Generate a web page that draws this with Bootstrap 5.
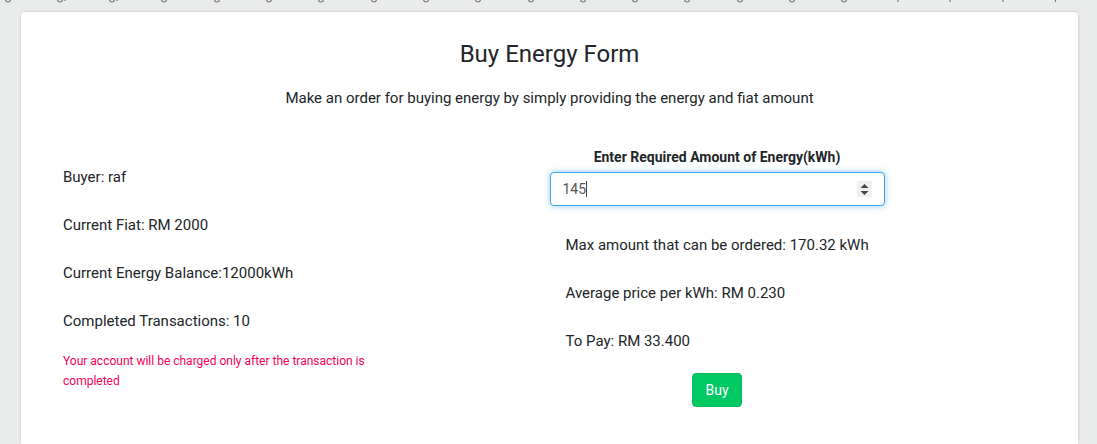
<!DOCTYPE html>
<html lang="en">
<head>
<meta charset="utf-8">
<meta name="viewport" content="width=device-width, initial-scale=1">
<title>Buy Energy Form</title>
<link href="https://cdn.jsdelivr.net/npm/bootstrap@5.3.0/dist/css/bootstrap.min.css" rel="stylesheet">
<style>
  body { background: #eaeceb; color: #212529; font-family: Roboto, sans-serif; font-size: 15px; line-height: 24px; }
  .axis-strip { height: 12px; }
  .order-card { min-height: calc(100vh - 12px); margin: 0 19px 0 21px; padding: 27px 26px 36px; border-radius: 4px 4px 0 0; box-shadow: 0 0 3px rgba(0, 0, 0, .18); }
  .order-card h1 { font-size: 24px; line-height: 30px; margin-bottom: 17px; }
  .order-card .intro { margin-bottom: 34px; }
  .facts { padding: 21px 16px 0; }
  .facts p, .totals p { margin-bottom: 24px; }
  .facts p:last-of-type { margin-bottom: 18px; }
  .notice { color: #f50057; font-size: 12px; line-height: 20px; max-width: 320px; }
  .order-card label { font-size: 14px; font-weight: 700; line-height: 24px; margin: 1px 0 3px; }
  .amount { height: 34px; padding: 0 12px; font-size: 14px; color: #555; border-radius: 4px; appearance: textfield; caret-color: transparent; }
  .amount, .amount:focus { border-color: #41a7e8; color: #555; box-shadow: 0 0 6px rgba(65, 167, 232, .6); }
  .amount::-webkit-inner-spin-button { appearance: none; margin: 0; }
  .caret-line { position: absolute; left: 36px; top: 9px; width: 1px; height: 16px; background: #444; pointer-events: none; }
  .spinner-arrows { position: absolute; right: 13px; top: 9px; pointer-events: none; }
  .totals { padding: 27px 0 0 16px; }
  .totals p:last-child { margin-bottom: 20px; }
  .buy-btn { --bs-btn-bg: #00c964; --bs-btn-border-color: #00be5f; --bs-btn-color: #fff; --bs-btn-hover-bg: #00b85b; --bs-btn-hover-color: #fff; --bs-btn-active-bg: #00a853; --bs-btn-active-color: #fff; height: 34px; padding: 0 12px; font-size: 14px; border-radius: 4px; }
</style>
</head>
<body>
<div class="axis-strip">
  <svg class="d-block w-100" height="4" viewBox="0 0 1097 4" preserveAspectRatio="none" fill="none" stroke="#777" stroke-width="1.2" aria-hidden="true">
    <defs><path id="g" d="M-2.5 0Q-2 2 0 2Q2 2 2.5 0"/></defs>
    <use href="#g" x="8"/><use href="#g" x="60"/><use href="#g" x="112"/><use href="#g" x="164"/><use href="#g" x="217"/><use href="#g" x="269"/><use href="#g" x="321"/>
    <use href="#g" x="374"/><use href="#g" x="426"/><use href="#g" x="478"/><use href="#g" x="531"/><use href="#g" x="583"/><use href="#g" x="635"/><use href="#g" x="687"/>
    <use href="#g" x="740"/><use href="#g" x="792"/><use href="#g" x="844"/>
    <path d="M65 0v1M117 0v1M898 0v2M950 0v2M1003 0v2M1055.500 0v2"/>
  </svg>
</div>
<main class="order-card bg-white">
  <header class="text-center">
    <h1 class="fw-normal">Buy Energy Form</h1>
    <p class="intro">Make an order for buying energy by simply providing the energy and fiat amount</p>
  </header>
  <form class="row g-0">
    <div class="col-6 facts">
      <p>Buyer: raf</p>
      <p>Current Fiat: RM 2000</p>
      <p>Current Energy Balance:12000kWh</p>
      <p>Completed Transactions: 10</p>
      <div class="notice">Your account will be charged only after the transaction is completed</div>
    </div>
    <div class="col-4 text-center">
      <label for="amount">Enter Required Amount of Energy(kWh)</label>
      <div class="position-relative">
        <input type="number" class="form-control amount" id="amount" value="145" autofocus>
        <span class="caret-line"></span>
        <svg class="spinner-arrows" width="15" height="16" viewBox="0 0 15 16" aria-hidden="true">
          <path fill="#f0f0f0" d="M0 0h15v16H0z"/>
          <path fill="#454545" d="M3.500 7 7.500 3l4 4zM3.500 10h8l-4 4z"/>
        </svg>
      </div>
      <div class="totals text-start">
        <p>Max amount that can be ordered: 170.32 kWh</p>
        <p>Average price per kWh: RM 0.230</p>
        <p>To Pay: RM 33.400</p>
      </div>
      <button type="submit" class="btn buy-btn">Buy</button>
    </div>
  </form>
</main>
<script src="https://cdn.jsdelivr.net/npm/bootstrap@5.3.0/dist/js/bootstrap.bundle.min.js"></script>
</body>
</html>
